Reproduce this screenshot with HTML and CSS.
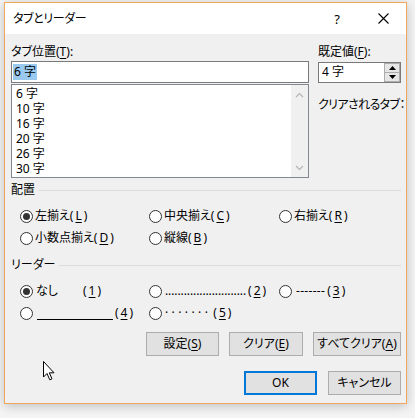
FILE: index.html
```html
<!DOCTYPE html>
<html lang="ja">
<head>
<meta charset="utf-8">
<link rel="stylesheet" href="styles.css">
</head>
<body>
<div class="window">
  <div class="titlebar">
    <span class="title">タブとリーダー</span>
    <span class="help">?</span>
    <span class="close"><svg width="11" height="11" viewBox="0 0 11 11"><path d="M0.5 0.5 L10.5 10.5 M10.5 0.5 L0.5 10.5" stroke="#000" stroke-width="1.1" fill="none"/></svg></span>
  </div>
  <div class="content">
    <div class="top">
      <div class="col-left">
        <div class="label">タブ位置(<u>T</u>):</div>
        <div class="input"><span class="sel">6 字</span></div>
        <div class="list">
          <div class="items">
            <div class="item">6 字</div>
            <div class="item">10 字</div>
            <div class="item">16 字</div>
            <div class="item">20 字</div>
            <div class="item">26 字</div>
            <div class="item">30 字</div>
          </div>
          <div class="scroll">
            <svg width="9" height="6" viewBox="0 0 9 6"><path d="M1 5 L4.5 1.5 L8 5" stroke="#b4b4b4" stroke-width="1.2" fill="none"/></svg>
            <svg width="9" height="6" viewBox="0 0 9 6"><path d="M1 1 L4.5 4.5 L8 1" stroke="#b4b4b4" stroke-width="1.2" fill="none"/></svg>
          </div>
        </div>
      </div>
      <div class="col-right">
        <div class="label">既定値(<u>F</u>):</div>
        <div class="spin">
          <span class="spin-val">4 字</span>
          <div class="spin-btns">
            <div class="sb"><svg width="7" height="4" viewBox="0 0 7 4"><path d="M0 4 L3.5 0 L7 4 Z" fill="#000"/></svg></div>
            <div class="sb"><svg width="7" height="4" viewBox="0 0 7 4"><path d="M0 0 L3.5 4 L7 0 Z" fill="#000"/></svg></div>
          </div>
        </div>
        <div class="cleared">クリアされるタブ：</div>
      </div>
    </div>

    <div class="group-head">配置</div>
    <div class="radios">
      <div class="radio"><span class="dot checked"></span>左揃え(<u>L</u>)</div>
      <div class="radio"><span class="dot"></span>中央揃え(<u>C</u>)</div>
      <div class="radio"><span class="dot"></span>右揃え(<u>R</u>)</div>
      <div class="radio"><span class="dot"></span>小数点揃え(<u>D</u>)</div>
      <div class="radio"><span class="dot"></span>縦線(<u>B</u>)</div>
    </div>

    <div class="group-head leader-head">リーダー</div>
    <div class="radios">
      <div class="radio"><span class="dot checked"></span><span class="nashi">なし</span>(<u>1</u>)</div>
      <div class="radio"><span class="dot"></span><span class="dots">..........................</span>(<u>2</u>)</div>
      <div class="radio"><span class="dot"></span><span class="dashes">-------</span>(<u>3</u>)</div>
      <div class="radio"><span class="dot"></span><span class="uline"></span>(<u>4</u>)</div>
      <div class="radio"><span class="dot"></span><span class="mdots">·······</span>(<u>5</u>)</div>
    </div>

    <div class="btnrow">
      <div class="btn w73">設定(<u>S</u>)</div>
      <div class="btn w74">クリア(<u>E</u>)</div>
      <div class="btn w87">すべてクリア(<u>A</u>)</div>
    </div>
    <div class="btnrow second">
      <div class="btn w73 default">OK</div>
      <div class="btn w73">キャンセル</div>
    </div>
  </div>
  <svg class="cursor" width="13" height="20" viewBox="0 0 13 20"><path d="M0.5 0.5 L0.5 16 L4 12.5 L6.8 18.8 L9 17.8 L6.3 11.8 L11 11.8 Z" fill="#fff" stroke="#000" stroke-width="1" stroke-linejoin="miter"/></svg>
</div>
</body>
</html>
```

FILE: styles.css
```css
* { box-sizing: border-box; }
html, body { margin: 0; padding: 0; }
body {
  width: 415px;
  height: 418px;
  overflow: hidden;
  background: #f4f4f4;
  font-family: "Noto Sans", "Noto Sans CJK JP", sans-serif;
  font-size: 12px;
  color: #000;
  font-feature-settings: "palt";
}
u { text-decoration: underline; text-underline-offset: 2px; }

.window {
  position: relative;
  margin: 2px 0 0 4px;
  width: 403px;
  border: 1px solid #f0a65b;
  background: #f0f0f0;
  box-shadow: 0 2px 10px rgba(0, 0, 0, 0.22);
}

.titlebar {
  height: 31px;
  background: #fff;
  display: flex;
  align-items: center;
  padding-left: 8px;
  line-height: 16px;
}
.title { flex: 1; letter-spacing: -0.4px; }
.help { font-size: 13px; width: 10px; text-align: center; margin-right: 36px; }
.close { display: flex; width: 11px; height: 11px; margin-right: 17px; }

.content { padding: 8px 5px 8px 6px; line-height: 16px; }

.top { display: flex; gap: 9px; }
.col-left { width: 298px; }
.col-right { flex: 1; min-width: 0; }
.label { height: 18px; padding-top: 2px; white-space: nowrap; }

.input {
  margin-top: 1px;
  height: 22px;
  border: 1px solid #7a7a7a;
  background: #fff;
  padding: 2px 0 0 1px;
}
.sel { background: #99c9ef; padding: 0 1px; display: inline-block; line-height: 16px; }

.list {
  margin-top: 1px;
  height: 94px;
  border: 1px solid #828790;
  background: #fff;
  display: flex;
}
.items { flex: 1; padding: 1px 0 0 4px; }
.item { height: 15px; line-height: 15px; }
.scroll {
  width: 17px;
  background: #f0f0f0;
  display: flex;
  flex-direction: column;
  justify-content: space-between;
  align-items: center;
  padding: 7px 0 6px;
}

.spin {
  margin-top: 2px;
  height: 21px;
  border: 1px solid #7a7a7a;
  background: #fff;
  display: flex;
}
.spin-val { flex: 1; padding: 1px 0 0 3px; }
.spin-btns { width: 16px; display: flex; flex-direction: column; }
.sb {
  flex: 1;
  background: #e6e6e6;
  border: 1px solid #acacac;
  display: flex;
  align-items: center;
  justify-content: center;
}
.sb + .sb { border-top: none; }
.cleared { margin-top: 14px; white-space: nowrap; letter-spacing: -0.6px; }

.group-head {
  margin-top: 4px;
  display: flex;
  align-items: center;
  gap: 4px;
  height: 16px;
}
.group-head::after {
  content: "";
  flex: 1;
  height: 1px;
  background: #dcdcdc;
}
.leader-head { margin-top: 8px; }

.radios {
  margin-top: 7px;
  padding-left: 9px;
  display: grid;
  grid-template-columns: 129px 130px 1fr;
  grid-auto-rows: 22px;
}
.radio { display: flex; align-items: center; gap: 2px; white-space: nowrap; }
.dot {
  width: 13px;
  height: 13px;
  border: 1px solid #333;
  border-radius: 50%;
  background: #fff;
  display: flex;
  align-items: center;
  justify-content: center;
  flex: none;
}
.dot.checked::after {
  content: "";
  width: 7px;
  height: 7px;
  border-radius: 50%;
  background: #333;
}
.nashi { width: 45px; margin-left: 1px; }
.dots { margin-left: 1px; letter-spacing: -0.1px; }
.dashes { margin-left: 2px; letter-spacing: 0.3px; }
.uline { display: inline-block; width: 76px; height: 13px; border-bottom: 1px solid #000; margin-left: 2px; }
.mdots { margin-left: 1px; letter-spacing: 3.4px; }

.btnrow { display: flex; justify-content: flex-end; gap: 10px; margin-top: 8px; }
.btnrow.second { margin-top: 15px; gap: 11px; }
.btn {
  height: 24px;
  border: 1px solid #adadad;
  background: #e1e1e1;
  display: flex;
  align-items: center;
  justify-content: center;
  white-space: nowrap;
}
.btn.default { border: 2px solid #0078d7; }
.w73 { width: 73px; }
.w74 { width: 74px; }
.w87 { width: 88px; }

.cursor { position: absolute; left: 38px; top: 358px; }
```
